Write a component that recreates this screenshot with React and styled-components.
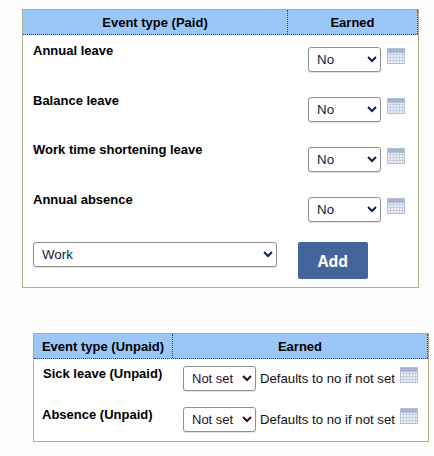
import React from 'react';
import styled, { createGlobalStyle } from 'styled-components';

const GlobalStyle = createGlobalStyle`
  html, body {
    margin: 0;
    background: #fdfdfd;
  }
  body {
    font-family: "Liberation Sans", Arial, sans-serif;
    font-size: 13px;
    color: #000;
  }
`;

const Page = styled.div`
  display: flex;
  flex-direction: column;
  align-items: flex-start;
  padding: 9px 0 0 22px;
  width: 434px;
  height: 456px;
  box-sizing: border-box;
  overflow: hidden;
`;

const Panel = styled.section`
  box-sizing: border-box;
  width: ${p => p.$width}px;
  background: #fff;
  border: 1px solid #b5ad87;
  margin: ${p => p.$margin || '0'};
`;

const Header = styled.div`
  display: grid;
  grid-template-columns: ${p => p.$first}px 1fr;
  height: 25px;
  background: #9ac7f8;
  border-bottom: 1px dotted #1b4a80;
  box-sizing: border-box;
`;

const HeadCell = styled.div`
  display: flex;
  align-items: center;
  justify-content: center;
  font-weight: bold;
  font-size: 13px;
  border-left: ${p => (p.$divider ? '1px dotted #1b4a80' : '0')};
  border-right: ${p => (p.$end ? '1px dotted #1b4a80' : '0')};
`;

const PaidRow = styled.div`
  display: flex;
  justify-content: space-between;
  height: 50px;
  box-sizing: border-box;
  padding: 8px 13px 0 10px;
`;

const UnpaidRow = styled.div`
  display: grid;
  grid-template-columns: 149px 1fr;
  height: 41px;
  box-sizing: border-box;
  padding-top: 7px;
`;

const Label = styled.div`
  font-weight: bold;
  font-size: 13px;
  line-height: 16px;
  white-space: nowrap;
  padding-left: ${p => p.$left || 0}px;
  margin-top: ${p => p.$shift || 0}px;
`;

const Controls = styled.div`
  display: flex;
  align-items: flex-start;
  gap: ${p => p.$gap || 6}px;
  padding-top: ${p => p.$top}px;
`;

const Select = styled.select`
  box-sizing: border-box;
  width: ${p => p.$width}px;
  height: 25px;
  padding: 0 0 0 4px;
  background: #fff;
  color: ${p => p.$color || '#0b2347'};
  border: 1px solid #8f8f8f;
  border-radius: 3px;
  font-family: "Liberation Sans", Arial, sans-serif;
  font-size: ${p => p.$size || 13.33}px;
  margin: 0;
  box-shadow: 0 1px 1px rgba(0, 0, 0, 0.12);
`;

const Hint = styled.span`
  font-size: 13.2px;
  line-height: 25px;
  color: #111;
  white-space: nowrap;
  margin-right: 1px;
`;

const AddRow = styled.div`
  display: flex;
  align-items: flex-start;
  gap: 21px;
  padding: 7px 0 8px 10px;
`;

const AddButton = styled.button`
  width: 70px;
  height: 37px;
  border: 0;
  border-radius: 2px;
  background: #44659c;
  color: #fff;
  font-family: "Open Sans", "Liberation Sans", sans-serif;
  font-weight: bold;
  font-size: 15.5px;
  padding: 0;
`;

const Icon = styled.svg`
  display: block;
  width: 18px;
  height: 16px;
  margin-top: 1px;
  flex: none;
`;

function CalendarIcon() {
  const xs = [3.5, 6.5, 9.5, 12.5, 15.5];
  const ys = [6.5, 9.5, 12.5];
  return (
    <Icon viewBox="0 0 18 16" aria-hidden="true">
      <rect x="0" y="0" width="18" height="16" fill="#b4c0d8" />
      <rect x="1" y="1" width="16" height="3" fill="#a6b3cf" />
      <rect x="1" y="5" width="16" height="10" fill="#eef0f6" />
      {xs.map(x => (
        <line key={x} x1={x} y1="5" x2={x} y2="15" stroke="#c5cee0" strokeWidth="1" />
      ))}
      {ys.map(y => (
        <line key={y} x1="1" y1={y} x2="17" y2={y} stroke="#c5cee0" strokeWidth="1" />
      ))}
    </Icon>
  );
}

const paid = [
  { name: 'Annual leave', shift: 0 },
  { name: 'Balance leave', shift: 0 },
  { name: 'Work time shortening leave', shift: -1 },
  { name: 'Annual absence', shift: -1 },
];
const unpaid = [
  { name: 'Sick leave (Unpaid)', left: 9 },
  { name: 'Absence (Unpaid)', left: 8 },
];

export default function App() {
  return (
    <Page>
      <GlobalStyle />
      <Panel $width={397}>
        <Header $first={264}>
          <HeadCell>Event type (Paid)</HeadCell>
          <HeadCell $divider $end>Earned</HeadCell>
        </Header>
        {paid.map(row => (
          <PaidRow key={row.name}>
            <Label $shift={row.shift}>{row.name}</Label>
            <Controls $top={4}>
              <Select $width={73} defaultValue="No">
                <option>No</option>
                <option>Yes</option>
              </Select>
              <CalendarIcon />
            </Controls>
          </PaidRow>
        ))}
        <AddRow>
          <Select $width={244} defaultValue="Work">
            <option>Work</option>
          </Select>
          <AddButton>Add</AddButton>
        </AddRow>
      </Panel>
      <Panel $width={396} $margin="45px 0 0 11px">
        <Header $first={138}>
          <HeadCell>Event type (Unpaid)</HeadCell>
          <HeadCell $divider $end>Earned</HeadCell>
        </Header>
        {unpaid.map(row => (
          <UnpaidRow key={row.name}>
            <Label $left={row.left}>{row.name}</Label>
            <Controls $top={0} $gap={4}>
              <Select $width={73} $color="#300a2e" $size={13} defaultValue="Not set">
                <option>Not set</option>
                <option>Yes</option>
                <option>No</option>
              </Select>
              <Hint>Defaults to no if not set</Hint>
              <CalendarIcon />
            </Controls>
          </UnpaidRow>
        ))}
      </Panel>
    </Page>
  );
}
